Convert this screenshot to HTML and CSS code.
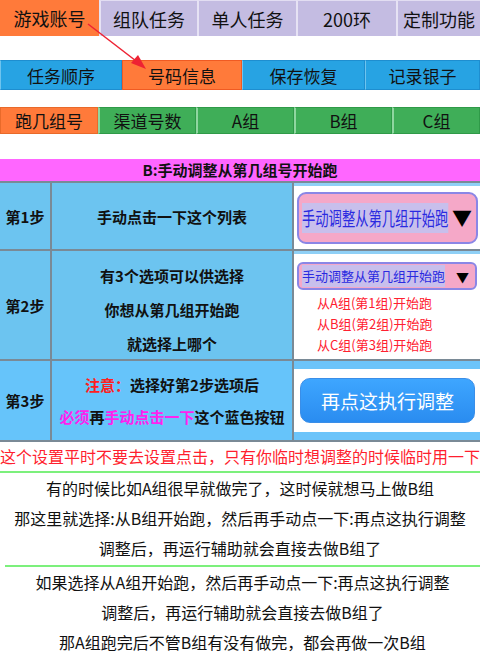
FILE: index.html
```html
<!DOCTYPE html>
<html lang="zh">
  <head>
    <meta charset="UTF-8" />
    <meta name="viewport" content="width=device-width, initial-scale=1.0" />
    <title>手动调整</title>
    <link rel="stylesheet" href="styles.css">
  </head>
  <body>
    <div class="page">
      <div class="tabs top">
        <div class="tab orange w99">游戏账号</div>
        <div class="tab lav w98">组队任务</div>
        <div class="tab lav w99">单人任务</div>
        <div class="tab lav w100">200环</div>
        <div class="tab lav grow">定制功能</div>
      </div>
      <svg class="arrow" width="160" height="80" viewBox="0 0 160 80">
        <line x1="88" y1="24" x2="140" y2="64" stroke="#ee2233" stroke-width="1.5" />
        <polygon points="146,69 131,63 138,55" fill="#ee2233" />
      </svg>
      <div class="tabs mid">
        <div class="tab blue w122">任务顺序</div>
        <div class="tab orange2 w120">号码信息</div>
        <div class="tab blue w123">保存恢复</div>
        <div class="tab blue grow">记录银子</div>
      </div>
      <div class="tabs low">
        <div class="tab orange3 w98">跑几组号</div>
        <div class="tab green w98">渠道号数</div>
        <div class="tab green w98">A组</div>
        <div class="tab green w98">B组</div>
        <div class="tab green grow">C组</div>
      </div>

      <div class="title">B:手动调整从第几组号开始跑</div>
      <div class="steps">
        <div class="cell step r1">第1步</div>
        <div class="cell desc r1">手动点击一下这个列表</div>
        <div class="cell pick r1">
          <div class="select big">
            <span class="sel">手动调整从第几组开始跑</span>
            <span class="caret">▼</span>
          </div>
        </div>

        <div class="cell step r2">第2步</div>
        <div class="cell desc r2 lines">
          <div>有3个选项可以供选择</div>
          <div>你想从第几组开始跑</div>
          <div>就选择上哪个</div>
        </div>
        <div class="cell pick r2 open">
          <div class="select small">
            <span class="sel">手动调整从第几组开始跑</span>
            <span class="caret">▼</span>
          </div>
          <ul class="options">
            <li>从A组(第1组)开始跑</li>
            <li>从B组(第2组)开始跑</li>
            <li>从C组(第3组)开始跑</li>
          </ul>
        </div>

        <div class="cell step r3">第3步</div>
        <div class="cell desc r3 lines">
          <div><span class="red">注意：</span>选择好第2步选项后</div>
          <div><span class="pink">必须</span>再<span class="pink">手动点击一下</span>这个蓝色按钮</div>
        </div>
        <div class="cell pick r3 run">
          <button class="go">再点这执行调整</button>
        </div>
      </div>

      <p class="warn">这个设置平时不要去设置点击，只有你临时想调整的时候临时用一下</p>
      <div class="note">
        <p>有的时候比如A组很早就做完了，这时候就想马上做B组</p>
        <p>那这里就选择:从B组开始跑，然后再手动点一下:再点这执行调整</p>
        <p>调整后，再运行辅助就会直接去做B组了</p>
      </div>
      <div class="note">
        <p>如果选择从A组开始跑，然后再手动点一下:再点这执行调整</p>
        <p>调整后，再运行辅助就会直接去做B组了</p>
        <p>那A组跑完后不管B组有没有做完，都会再做一次B组</p>
      </div>
    </div>
  </body>
</html>
```

FILE: styles.css
```css
* {
  margin: 0;
  padding: 0;
  box-sizing: border-box;
}
body {
  width: 480px;
  background: white;
  font-family: "Noto Sans CJK SC", "Noto Sans", sans-serif;
  color: #111;
}
.page {
  position: relative;
  width: 480px;
}
.tabs {
  display: flex;
}
.tab {
  display: flex;
  align-items: center;
  justify-content: center;
  white-space: nowrap;
}
.w98 { width: 98px; }
.w99 { width: 99px; }
.w100 { width: 100px; }
.w120 { width: 120px; }
.w122 { width: 122px; }
.w123 { width: 123px; }
.grow { flex: 1; }

.top {
  height: 36px;
  font-size: 18px;
}
.top .lav {
  background: #c4bce2;
  border-top: 1px solid #e2ddf2;
  border-left: 2px solid #e6e2f4;
}
.top .orange {
  background: #ff7a3a;
}
.mid {
  margin-top: 24px;
  height: 30px;
  font-size: 17px;
}
.mid .blue {
  background: #27a3e3;
  border: 1px solid #1e8ed0;
  border-left: 1px solid #6fc4ee;
}
.mid .orange2 {
  background: #ff7a3a;
  border: 1px solid #f05a22;
}
.low {
  margin-top: 17px;
  height: 27px;
  font-size: 17px;
}
.low .orange3 {
  background: #ff7a3a;
  border: 1px solid #e86a2a;
}
.low .green {
  background: #3fae58;
  border: 1px solid #2f9a48;
  border-left: 2px solid #8fd6a0;
}

.arrow {
  position: absolute;
  left: 0;
  top: 0;
}

.title {
  margin-top: 25px;
  height: 22px;
  background: #ff66ff;
  font-size: 15px;
  font-weight: bold;
  text-align: center;
  line-height: 22px;
}
.steps {
  display: grid;
  grid-template-columns: 50px 240px 1fr;
  grid-template-rows: 66px 108px 79px;
  gap: 2px;
  background: #7a8a96;
  padding: 2px 0;
}
.cell {
  background: #6cc4f0;
  font-size: 15px;
  font-weight: bold;
  display: flex;
  align-items: center;
  justify-content: center;
  white-space: nowrap;
}
.r3.step,
.r3.desc {
  background: #66c4fa;
}
.lines {
  flex-direction: column;
  gap: 11px;
}
.r2.lines {
  gap: 13px;
  padding-top: 8px;
}
.pick {
  background: white;
  border-top: 3px solid #8fd0f6;
  justify-content: flex-start;
  padding-left: 3px;
}
.select {
  display: flex;
  align-items: center;
  background: #f5a8c8;
  border: 2px solid #8a86e6;
  color: #2a2ae0;
  font-weight: normal;
}
.select .sel {
  background: #c8bfec;
}
.big {
  width: 181px;
  height: 52px;
  border-radius: 9px;
  padding-left: 3px;
}
.big .sel {
  display: inline-block;
  font-size: 19px;
  line-height: 30px;
  width: 209px;
  margin-right: -63px;
  transform-origin: left center;
  transform: scaleX(0.7);
}
.big .caret {
  color: #000;
  font-size: 20px;
  margin-left: auto;
  margin-right: 4px;
}
.open {
  flex-direction: column;
  align-items: flex-start;
  justify-content: flex-start;
  padding-top: 8px;
}
.small {
  width: 180px;
  height: 28px;
  border-radius: 6px;
  font-size: 13px;
  padding-left: 3px;
}
.small .sel {
  line-height: 22px;
}
.small .caret {
  color: #000;
  font-size: 13px;
  margin-left: auto;
  margin-right: 6px;
}
.options {
  list-style: none;
  margin-left: 20px;
  margin-top: 2px;
  color: #ff2030;
  font-size: 13px;
  font-weight: normal;
  line-height: 21px;
}
.run {
  border-top: 8px solid #6cc4fa;
  border-bottom: 8px solid #6cc4fa;
  padding-left: 6px;
}
.go {
  width: 175px;
  height: 45px;
  border: 1px solid #3a8ee8;
  border-radius: 10px;
  background: linear-gradient(#3ea6ff, #2a8cf0);
  color: white;
  font-family: inherit;
  font-size: 19px;
}
.red {
  color: #ff2020;
}
.pink {
  color: #ff22ee;
}
.warn {
  color: #ff1f2f;
  font-size: 16px;
  text-align: center;
  white-space: nowrap;
  line-height: 29px;
  border-bottom: 2px solid #7cf07c;
}
.note {
  font-size: 16px;
  text-align: center;
  white-space: nowrap;
}
.note p {
  line-height: 30px;
}
.note + .note {
  border-top: 2px solid #7cf07c;
  margin-left: 5px;
  margin-top: 2px;
}
```
